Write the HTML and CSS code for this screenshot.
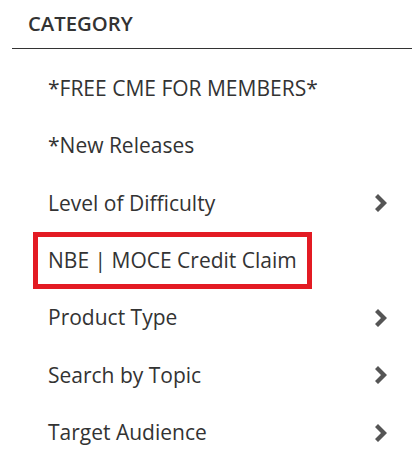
FILE: index.html
```html
<!DOCTYPE html>
<html>
<head>
    <title>Category</title>
    <link rel="stylesheet" href="styles.css">
</head>
<body>
    <div class="sidebar">
        <h2 class="sidebar-title">Category</h2>
        <ul class="category-list">
            <li><a href="#">*FREE CME FOR MEMBERS*</a></li>
            <li><a href="#">*New Releases</a></li>
            <li>
                <a href="#">Level of Difficulty</a>
                <svg class="chevron" width="13" height="18" viewBox="0 0 13 18"><polygon points="0,3 3,0 12,9 3,18 0,15 6,9"/></svg>
            </li>
            <li><a href="#" class="highlight">NBE | MOCE Credit Claim</a></li>
            <li>
                <a href="#">Product Type</a>
                <svg class="chevron" width="13" height="18" viewBox="0 0 13 18"><polygon points="0,3 3,0 12,9 3,18 0,15 6,9"/></svg>
            </li>
            <li>
                <a href="#">Search by Topic</a>
                <svg class="chevron" width="13" height="18" viewBox="0 0 13 18"><polygon points="0,3 3,0 12,9 3,18 0,15 6,9"/></svg>
            </li>
            <li>
                <a href="#">Target Audience</a>
                <svg class="chevron" width="13" height="18" viewBox="0 0 13 18"><polygon points="0,3 3,0 12,9 3,18 0,15 6,9"/></svg>
            </li>
        </ul>
    </div>
</body>
</html>
```

FILE: styles.css
```css
body {
    margin: 0;
    font-family: "Open Sans", Arial, sans-serif;
    background-color: #ffffff;
    color: #333;
}

.sidebar {
    padding-left: 12px;
}

.sidebar-title {
    margin: 0;
    padding: 10px 0 11px 16px;
    font-size: 20.3px;
    font-weight: 600;
    line-height: 27px;
    text-transform: uppercase;
    border-bottom: 1px solid #333;
}

.category-list {
    list-style: none;
    margin: 11px 0 0 0;
    padding: 0 24px 0 21px;
}

.category-list li {
    display: flex;
    justify-content: space-between;
    align-items: center;
}

.category-list a {
    display: inline-block;
    padding: 10px 10px;
    border: 5px solid transparent;
    font-size: 21px;
    line-height: 27.33px;
    color: #333;
    text-decoration: none;
}

.category-list a.highlight {
    border-color: #e31b23;
}

.chevron {
    fill: #555;
}
```
